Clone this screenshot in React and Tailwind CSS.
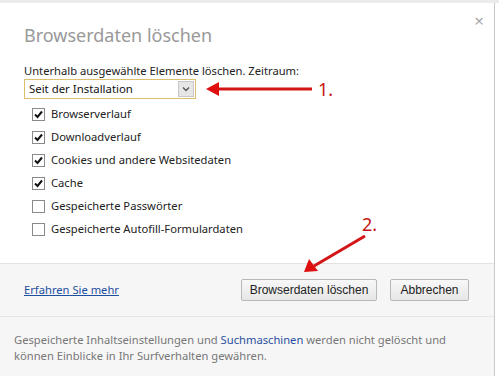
import React from "react";

function Check({ checked }) {
  return (
    <span className="w-[13px] h-[13px] border border-[#8a8a8a] bg-white flex items-center justify-center shrink-0">
      {checked && (
        <svg width="9" height="9" viewBox="0 0 9 9">
          <path d="M1 4.5 L3.5 7 L8 1.5" stroke="#111" strokeWidth="2" fill="none" />
        </svg>
      )}
    </span>
  );
}

export default function App() {
  const items = [
    ["Browserverlauf", true],
    ["Downloadverlauf", true],
    ["Cookies und andere Websitedaten", true],
    ["Cache", true],
    ["Gespeicherte Passwörter", false],
    ["Gespeicherte Autofill-Formulardaten", false],
  ];
  return (
    <div className="w-[499px] h-[376px] relative bg-white overflow-hidden text-[#333]" style={{ fontFamily: '"Noto Sans", sans-serif' }}>
      <div className="h-[3px] bg-[#ebebeb]" />
      <div className="w-[495px] h-[373px] border-r border-[#c9c9c9] flex flex-col">
        <div className="h-[260px] bg-white relative">
          <div className="absolute right-[10px] top-[5px] text-[#aaa] text-[17px]">×</div>
          <div className="pl-[24px] pt-[18px] text-[18px] text-[#999] leading-[28px]">Browserdaten löschen</div>
          <div className="pl-[24px] pt-[14px] text-[11.2px] leading-[16px] text-[#222]">Unterhalb ausgewählte Elemente löschen. Zeitraum:</div>
          <div className="ml-[24px] mt-[0px] w-[172px] h-[20px] border border-[#dcbf6e] flex items-center bg-white">
            <span className="flex-1 pl-[4px] text-[11.4px] text-[#111] leading-none">Seit der Installation</span>
            <span className="w-[16px] h-[16px] mr-[1px] bg-[#e6e6e6] border border-[#c8c8c8] flex items-center justify-center">
              <svg width="8" height="6" viewBox="0 0 8 6"><path d="M1 1.5 L4 4.5 L7 1.5" stroke="#555" strokeWidth="1.3" fill="none" /></svg>
            </span>
          </div>
          <div className="pl-[32px] pt-[4px] flex flex-col">
            {items.map(([t, c]) => (
              <div key={t} className="h-[23px] flex items-center gap-[6px] text-[11.2px] text-[#222]">
                <Check checked={c} />
                <span>{t}</span>
              </div>
            ))}
          </div>
        </div>
        <div className="h-[53px] bg-[#f6f6f6] border-t border-[#e3e3e3] flex items-center pl-[24px] pr-[25px]">
          <a className="text-[11.2px] text-[#1d4f9f] underline flex-1">Erfahren Sie mehr</a>
          <div className="flex gap-[13px]" style={{ fontFamily: '"Liberation Sans", Arial, sans-serif' }}>
            <button className="w-[136px] h-[22px] border border-[#b8b8b8] rounded-[2px] bg-gradient-to-b from-[#f8f8f8] to-[#e6e6e6] text-[12px] text-[#222]">Browserdaten löschen</button>
            <button className="w-[79px] h-[22px] border border-[#b8b8b8] rounded-[2px] bg-gradient-to-b from-[#f8f8f8] to-[#e6e6e6] text-[12px] text-[#222]">Abbrechen</button>
          </div>
        </div>
        <div className="flex-1 bg-[#f6f6f6] border-t border-[#e6e6e6] pl-[14px] pt-[15px] text-[11.2px] leading-[16px] text-[#777]">
          Gespeicherte Inhaltseinstellungen und <span className="text-[#2a4fa0]">Suchmaschinen</span> werden nicht gelöscht und<br />
          können Einblicke in Ihr Surfverhalten gewähren.
        </div>
      </div>
      <svg className="absolute left-0 top-0" width="499" height="376" viewBox="0 0 499 376">
        <path d="M214 89 L312 89" stroke="#d41515" strokeWidth="3" />
        <path d="M206 89 L219 82 L219 96 Z" fill="#e00f0f" />
        <path d="M365 236 L314 266" stroke="#d41515" strokeWidth="3" />
        <path d="M304 272 L309 259 L318 271 Z" fill="#e00f0f" />
      </svg>
      <div className="absolute left-[318px] top-[76px] text-[18px] text-[#c41414]" style={{ fontFamily: '"Noto Sans", sans-serif' }}>1.</div>
      <div className="absolute left-[362px] top-[211px] text-[18px] text-[#c41414]" style={{ fontFamily: '"Noto Sans", sans-serif' }}>2.</div>
    </div>
  );
}
